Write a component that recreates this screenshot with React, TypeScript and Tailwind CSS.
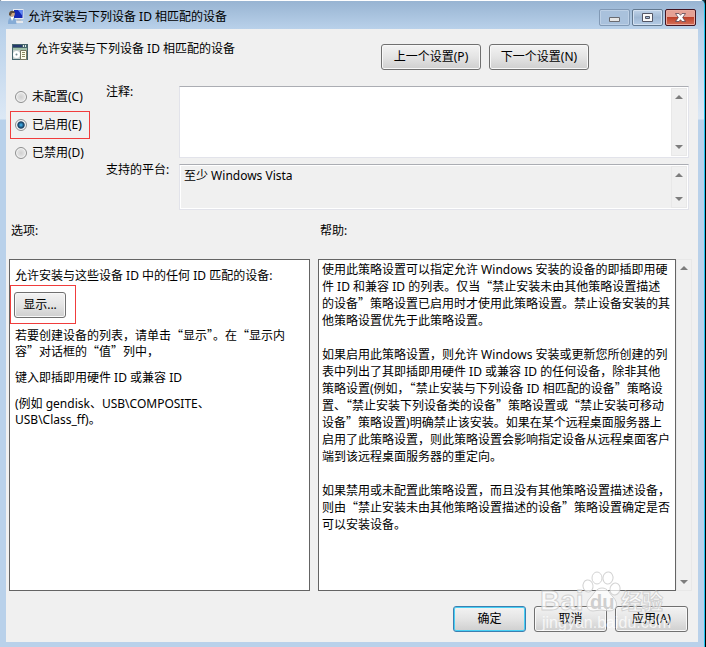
import { useState } from "react";
import type { ReactNode } from "react";

const BUTTON_BASE =
  "h-[26px] rounded-[3px] border bg-linear-to-b from-[#f3f3f3] via-[#e4e4e4] to-[#cfcfcf] whitespace-nowrap";
const BUTTON = `${BUTTON_BASE} border-[#707070] shadow-[inset_0_0_0_1px_#f8f8f8]`;
const DEFAULT_BUTTON = `${BUTTON_BASE} border-[#3c7fb1] shadow-[inset_0_0_0_1px_#48d0f4]`;

const STATES = [
  { value: "none", label: "未配置(C)" },
  { value: "enabled", label: "已启用(E)" },
  { value: "disabled", label: "已禁用(D)" },
];

const HELP = [
  "使用此策略设置可以指定允许 Windows 安装的设备的即插即用硬件 ID 和兼容 ID 的列表。仅当“禁止安装未由其他策略设置描述的设备”策略设置已启用时才使用此策略设置。禁止设备安装的其他策略设置优先于此策略设置。",
  "如果启用此策略设置，则允许 Windows 安装或更新您所创建的列表中列出了其即插即用硬件 ID 或兼容 ID 的任何设备，除非其他策略设置(例如，“禁止安装与下列设备 ID 相匹配的设备”策略设置、“禁止安装下列设备类的设备”策略设置或“禁止安装可移动设备”策略设置)明确禁止该安装。如果在某个远程桌面服务器上启用了此策略设置，则此策略设置会影响指定设备从远程桌面客户端到该远程桌面服务器的重定向。",
  "如果禁用或未配置此策略设置，而且没有其他策略设置描述设备，则由“禁止安装未由其他策略设置描述的设备”策略设置确定是否可以安装设备。",
];

// Quotes take the full-width form of the Chinese font
function Zh({ text }: { text: string }) {
  return (
    <>
      {text.split(/([“”])/).map((part, i) =>
        part === "“" || part === "”" ? (
          <span key={i} className="font-['Noto_Sans_CJK_SC',sans-serif] leading-none">
            {part}
          </span>
        ) : (
          part
        )
      )}
    </>
  );
}

function UserMonitorIcon() {
  return (
    <svg width="16" height="16" viewBox="0 0 16 16" aria-hidden="true">
      <path d="M5 0h10.500v10H5z" fill="#e4eaf2" />
      <path d="M6 1h8.500v8H6z" fill="#1428b4" />
      <path d="M10 1h4.500v6z" fill="#5f86f4" />
      <path d="M9 10h4v2H9z" fill="#b9bfc8" />
      <path d="M7 12h8v2H7z" fill="#e6e9ee" />
      <circle cx="4" cy="5" r="2.800" fill="#d0a880" />
      <path d="M1 6c-.5-5 5.500-5.500 6-2L4 4 2.500 7z" fill="#5a4a3c" />
      <path d="M0 15c0-5 1.500-7 4-7s4 2 4.500 7z" fill="#86acd6" />
      <path d="M2.500 8l1.500 4 2-4z" fill="#fff" />
    </svg>
  );
}

function PolicyIcon() {
  return (
    <svg width="16" height="16" viewBox="0 0 16 16" aria-hidden="true">
      <path d="M0 0h16v16H0z" fill="#46646c" />
      <path d="M1 1h9v2H1z" fill="#24386c" />
      <path d="M11 1h1v2h-1zM13 1h1v2h-1z" fill="#dfe8e8" />
      <path d="M1 4h14v2H1z" fill="#9fc0a8" />
      <path d="M1 6h14v9H1z" fill="#c2cccc" />
      <circle cx="4.500" cy="10.500" r="3.500" fill="#fff" />
      <circle cx="4.500" cy="10.500" r="1" fill="#6f8890" />
      <path d="M8.500 6.500h6v9h-6z" fill="#fffdea" stroke="#77775f" />
      <path d="M10 8.500h3M10 10.500h3M10 12.500h3" stroke="#8a8a60" />
    </svg>
  );
}

function ScrollBar() {
  return (
    <div className="flex w-4 shrink-0 flex-col justify-between border border-[#e8e8e8] bg-[#f0f0f0]">
      <button aria-label="向上滚动" className="flex h-4 items-center justify-center">
        <svg width="8" height="4" viewBox="0 0 8 4">
          <path d="M4 0l4 4H0z" fill="#7d7d7d" />
        </svg>
      </button>
      <button aria-label="向下滚动" className="flex h-4 items-center justify-center">
        <svg width="8" height="4" viewBox="0 0 8 4">
          <path d="M0 0h8L4 4z" fill="#7d7d7d" />
        </svg>
      </button>
    </div>
  );
}

function TitleBar() {
  const button = "flex h-[17px] w-[31px] items-center justify-center rounded-[2px] border";
  return (
    <header className="flex h-[29px] items-start justify-between border-t border-white bg-linear-to-b from-[#98b4d2] to-[#b9d1ea] pl-2 pr-2">
      <div className="flex items-center gap-1 pt-2">
        <UserMonitorIcon />
        <h1 className="leading-4">允许安装与下列设备 ID 相匹配的设备</h1>
      </div>
      <div className="flex gap-[2px] pt-2">
        <button aria-label="最小化" className={`${button} border-[#8199b5] bg-[#a9c1dc] shadow-[inset_0_0_0_1px_#bdd0e6]`}>
          <svg width="11" height="9" viewBox="0 0 11 9">
            <path d="M.5 4.500h10v4H.5z" fill="#e6e6e6" stroke="#696a70" />
          </svg>
        </button>
        <button aria-label="最大化" className={`${button} border-[#62788f] bg-linear-to-b from-[#bfd2e8] via-[#9fb8d4] to-[#b5cce6] shadow-[inset_0_0_0_1px_#d3e1f1]`}>
          <svg width="11" height="9" viewBox="0 0 11 9">
            <path d="M.5.5h10v8H.5z" fill="#fafafa" stroke="#535666" />
            <path d="M3.500 3.500h4v2h-4z" fill="#9fb8d4" stroke="#535666" />
          </svg>
        </button>
        <button aria-label="关闭" className={`${button} border-[#431420] bg-linear-to-b from-[#e5a195] from-45% via-[#be4029] via-50% to-[#d4705a] shadow-[inset_0_0_0_1px_#e9aa9f]`}>
          <svg width="11" height="9" viewBox="0 0 11 9">
            <path d="M.5.5H4l1.500 1.800L7 .5h3.500L7.700 4.500l2.800 4H7L5.500 6.700 4 8.500H.5l2.800-4z" fill="#fff" stroke="#5a4450" strokeWidth=".8" />
          </svg>
        </button>
      </div>
    </header>
  );
}

function Panel({ children, className = "" }: { children: ReactNode; className?: string }) {
  return <div className={`border border-[#646464] bg-white ${className}`}>{children}</div>;
}

function Watermark() {
  return (
    <svg
      className="pointer-events-none absolute bottom-1 right-[22px]"
      width="146"
      height="72"
      viewBox="0 0 146 72"
      aria-hidden="true"
    >
      <g fill="#fff" fillOpacity="0.7" stroke="#c8c8c8" strokeOpacity="0.8">
        <ellipse cx="51" cy="15" rx="5" ry="6" transform="rotate(-10 51 15)" />
        <ellipse cx="60" cy="7" rx="5" ry="6" />
        <ellipse cx="71" cy="7" rx="5" ry="6" transform="rotate(10 71 7)" />
        <ellipse cx="78" cy="18" rx="5" ry="6" transform="rotate(15 78 18)" />
        <path d="M65 17c6 0 7 5 11 9 6 6 4 14-4 14-3 0-5-1-8-1s-5 1-8 1c-7 0-8-8-3-13 4-4 6-10 12-10z" />
        <text x="3" y="39" fontSize="28" fontWeight="700" fontFamily="Liberation Sans, sans-serif">Bai</text>
        <text x="84" y="38" fontSize="21" fontWeight="700" fontFamily="Noto Sans CJK SC, sans-serif">经验</text>
      </g>
      <text x="53" y="38" fontSize="20" fontWeight="700" fill="#cfcfcf" fontFamily="Liberation Sans, sans-serif">du</text>
      <text x="5" y="57" fontSize="16" fill="#fff" fillOpacity="0.75" fontFamily="Liberation Sans, sans-serif">jingyan.baidu.com</text>
    </svg>
  );
}

export default function App() {
  const [state, setState] = useState("enabled");
  const [comment, setComment] = useState("");

  return (
    <div className="relative flex min-h-screen w-full flex-col border-r border-black bg-[#20303a] font-['Noto_Sans','Noto_Sans_CJK_SC',sans-serif] text-[12px] leading-4 text-black">
      <div className="flex flex-1 flex-col overflow-hidden rounded-tl-[2px] rounded-tr-[5px] border-r border-[#1fc3ee] bg-[linear-gradient(to_bottom,#b9d1ea_30px,#dce8f5_119px,#b9d1ea_120px)]">
        <TitleBar />
        <main className="mb-[5px] ml-[6px] mr-[6px] flex flex-1 flex-col bg-[#f0f0f0] pb-[10px]">
          <div className="flex items-start pl-[6px] pt-[15px]">
            <div className="flex w-[369px] items-start gap-2">
              <PolicyIcon />
              <h2 className="-mt-[3px]">允许安装与下列设备 ID 相匹配的设备</h2>
            </div>
            <div className="flex gap-2">
              <button className={`${BUTTON} w-[100px]`}>上一个设置(P)</button>
              <button className={`${BUTTON} w-[100px]`}>下一个设置(N)</button>
            </div>
          </div>

          <div className="mt-[13px] flex gap-4 pl-1 pr-[9px]">
            <fieldset className="w-20 shrink-0">
              {STATES.map((s) => (
                <label
                  key={s.value}
                  className={`flex h-7 items-center gap-[5px] border pl-1 whitespace-nowrap ${
                    s.value === "enabled" ? "border-[#f03c3c]" : "border-transparent"
                  }`}
                >
                  <input
                    type="radio"
                    name="state"
                    value={s.value}
                    checked={state === s.value}
                    onChange={() => setState(s.value)}
                    className="h-3 w-3 shrink-0 appearance-none rounded-full border border-[#8e8f8f] bg-radial from-[#d0d0d0] to-[#f4f4f4] shadow-[inset_0_0_0_1px_#f4f4f4] checked:from-[#3aa0d8] checked:from-10% checked:via-[#143a5c] checked:via-45% checked:to-[#e8eef2] checked:to-60%"
                  />
                  {s.label}
                </label>
              ))}
            </fieldset>
            <div className="grid flex-1 grid-cols-[73px_1fr] gap-y-[6px] pt-[3px]">
              <label htmlFor="comment" className="leading-3">注释:</label>
              <div className="flex h-[72px] border border-[#e2e3ea] border-t-[#abadb3] bg-white p-px">
                <textarea
                  id="comment"
                  value={comment}
                  onChange={(e) => setComment(e.target.value)}
                  className="min-w-0 flex-1 resize-none px-1 outline-none"
                />
                <ScrollBar />
              </div>
              <label htmlFor="platform" className="leading-3 whitespace-nowrap">支持的平台:</label>
              <div className="flex h-[46px] border border-[#e2e3ea] border-t-[#abadb3] bg-white p-px">
                <textarea
                  id="platform"
                  readOnly
                  value="至少 Windows Vista"
                  className="min-w-0 flex-1 resize-none bg-[#f0f0f0] px-[3px] pt-[2px] outline-none"
                />
                <ScrollBar />
              </div>
            </div>
          </div>

          <div className="mt-[13px] flex flex-1 gap-2 pl-[3px] pr-[6px]">
            <section className="flex flex-[301] flex-col">
              <h3 className="pl-[2px]">选项:</h3>
              <Panel className="mt-5 flex-1 pt-2">
                <p className="pl-[5px]">允许安装与这些设备 ID 中的任何 ID 匹配的设备:</p>
                <div className="mt-px flex h-[39px] w-[66px] items-center border border-[#f03c3c] pl-[3px]">
                  <button className={`${BUTTON} w-[52px]`}>显示...</button>
                </div>
                <div className="mt-1 flex flex-col gap-[10px] px-[5px]">
                  <p><Zh text="若要创建设备的列表，请单击“显示”。在“显示内容”对话框的“值”列中，" /></p>
                  <p>键入即插即用硬件 ID 或兼容 ID</p>
                  <p>(例如 gendisk、USB\COMPOSITE、<br />USB\Class_ff)。</p>
                </div>
              </Panel>
            </section>
            <section className="flex flex-[374] flex-col">
              <h3 className="pl-[2px]">帮助:</h3>
              <div className="mt-5 flex flex-1">
                <Panel className="flex min-w-0 flex-1 flex-col gap-[17px] px-[3px] pt-px leading-[17px]">
                  {HELP.map((p) => (
                    <p key={p}><Zh text={p} /></p>
                  ))}
                </Panel>
                <ScrollBar />
              </div>
            </section>
          </div>

          <div className="mt-[15px] flex justify-end gap-2 pr-[10px]">
            <button className={`${DEFAULT_BUTTON} w-[73px]`}>确定</button>
            <button className={`${BUTTON} w-[73px]`}>取消</button>
            <button className={`${BUTTON} w-[73px]`}>应用(A)</button>
          </div>
        </main>
      </div>
      <Watermark />
    </div>
  );
}
